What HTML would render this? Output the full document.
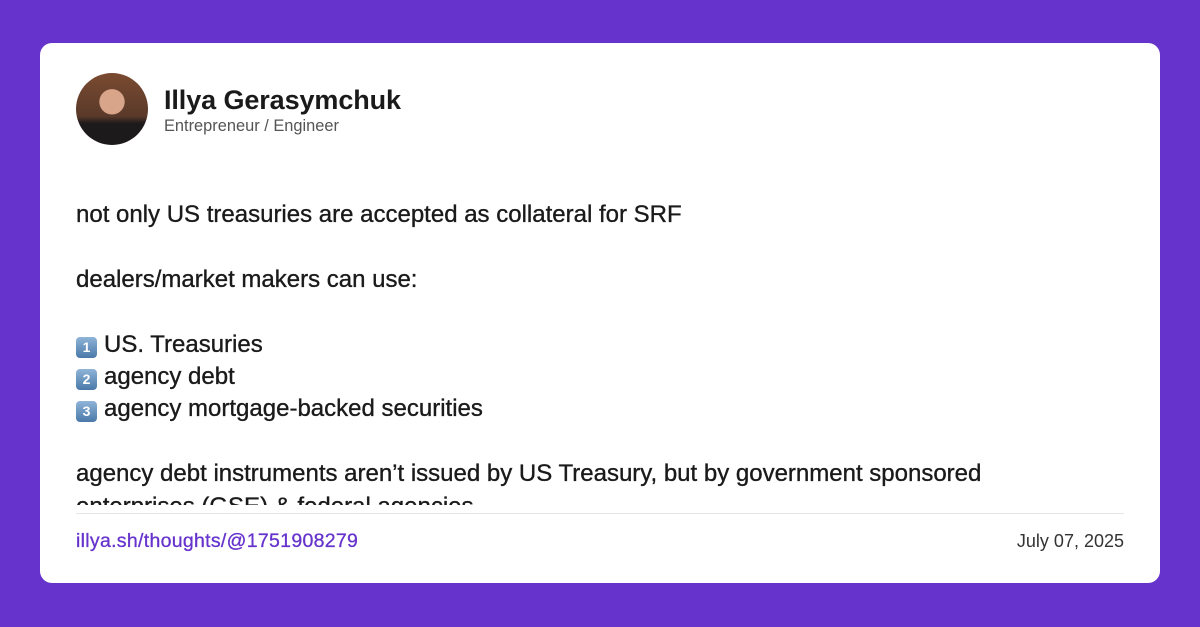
<!DOCTYPE html>
<html><head><meta charset="utf-8"><style>
*{margin:0;padding:0;box-sizing:border-box}
body{width:1200px;height:627px;background:#6633cc;font-family:"Liberation Sans",sans-serif;position:relative;overflow:hidden}
.card{position:absolute;left:40px;top:43px;width:1120px;height:540px;background:#fff;border-radius:12px}
.av{position:absolute;left:76px;top:73px;width:72px;height:72px;border-radius:50%;overflow:hidden;background:radial-gradient(circle at 50% 40%,#d9a58a 0 22%,transparent 23%),linear-gradient(#7a4a30,#5a3a2a 60%,#1d1a1c 70%)}
.name{position:absolute;left:164px;top:85px;font-size:27px;font-weight:bold;color:#1a1a1a;letter-spacing:-0.1px}
.sub{position:absolute;left:164px;top:117px;font-size:16.4px;color:#555}
.body{position:absolute;left:76px;top:199px;width:945px;height:306px;overflow:hidden;font-size:24px;line-height:32.4px;color:#1a1a1a;-webkit-text-stroke:0.35px #1a1a1a;letter-spacing:0px}
.k{display:inline-block;width:21px;height:21px;border-radius:4px;background:linear-gradient(#8fb4d8,#4a79a8);color:#fff;font-size:14px;font-weight:bold;text-align:center;line-height:21px;vertical-align:0px;margin-right:7px;-webkit-text-stroke:0;letter-spacing:0}
.hr{position:absolute;left:76px;right:76px;top:513px;height:1px;background:#e5e5e5}
.link{position:absolute;left:76px;top:530px;font-size:19.5px;color:#6633cc;-webkit-text-stroke:0.3px #6633cc;letter-spacing:0.3px}
.date{position:absolute;right:76px;top:531px;font-size:18px;color:#333}
</style></head><body>
<div class="card"></div>
<div class="av"></div>
<div class="name">Illya Gerasymchuk</div>
<div class="sub">Entrepreneur / Engineer</div>
<div class="body">not only US treasuries are accepted as collateral for SRF<br><br>dealers/market makers can use:<br><br><span class="k">1</span>US. Treasuries<br><span class="k">2</span>agency debt<br><span class="k">3</span>agency mortgage-backed securities<br><br>agency debt instruments aren’t issued by US Treasury, but by government sponsored enterprises (GSE) &amp; federal agencies</div>
<div class="hr"></div>
<div class="link">illya.sh/thoughts/@1751908279</div>
<div class="date">July 07, 2025</div>
</body></html>
